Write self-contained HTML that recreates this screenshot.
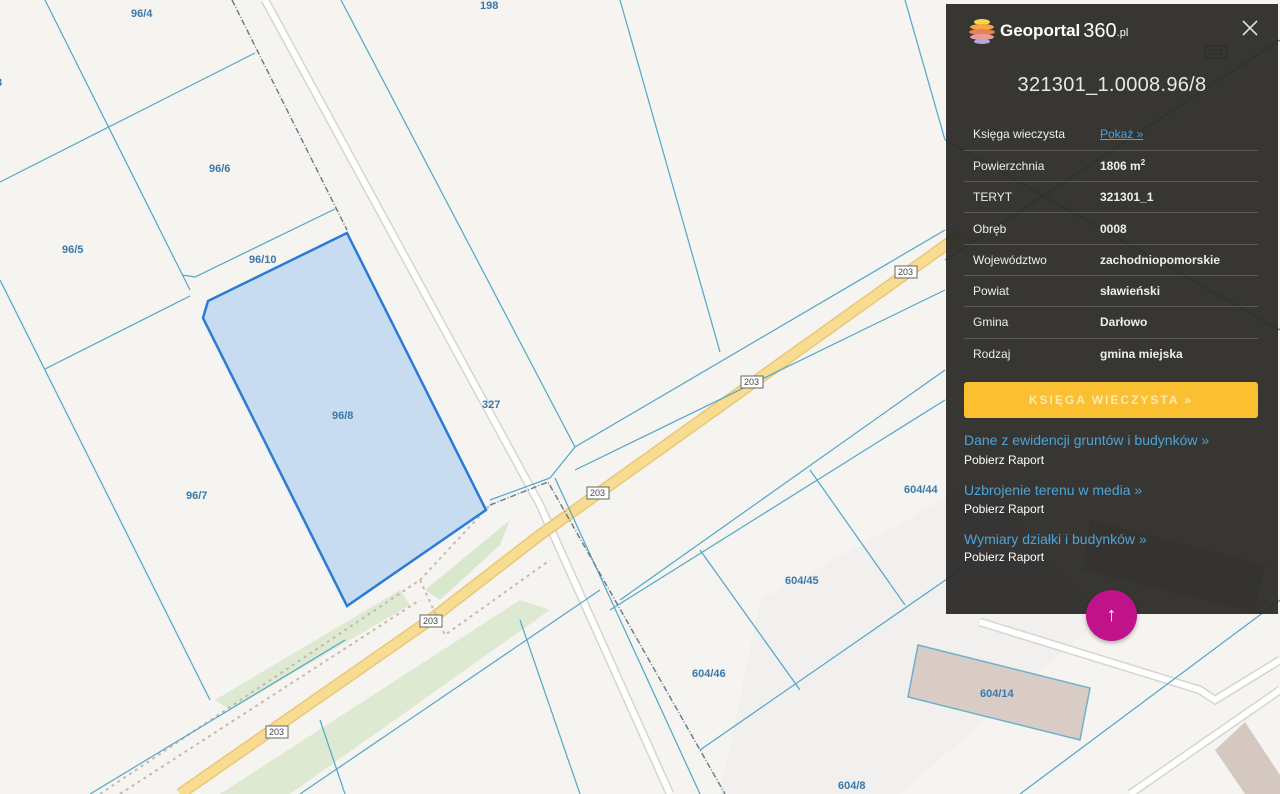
<!DOCTYPE html>
<html><head><meta charset="utf-8"><style>
*{margin:0;padding:0;box-sizing:border-box}
body{width:1280px;height:794px;overflow:hidden;background:#f6f4f1;position:relative;font-family:"Liberation Sans",sans-serif}
svg.map{position:absolute;left:0;top:0}
.panel{position:absolute;left:946px;top:4px;width:332px;height:610px;background:rgba(40,39,37,0.93);color:#fff}
.logo{position:absolute;left:22px;top:14px;display:flex;align-items:center;font-size:17px;font-weight:bold;color:#fff}
.logo .n{font-weight:normal;font-size:20px;margin-left:3px}
.logo .pl{font-size:11px;font-weight:normal;margin-top:4px}
.close{position:absolute;right:18px;top:14px;width:20px;height:20px}
.title{position:absolute;left:0;width:100%;top:70px;text-align:center;font-size:20px;color:#e8e8e8;letter-spacing:0.3px}
table{position:absolute;left:18px;top:115px;width:294px;border-collapse:collapse;font-size:12px}
td{height:31.3px;border-bottom:1px solid #5a5957;padding-left:9px;color:#eee}
td.v{font-weight:bold;width:168px;padding-left:10px}
tr:last-child td{border-bottom:none}
a{color:#4aa3d8}
.btn{position:absolute;left:18px;top:378px;width:294px;height:36px;background:#fbbf32;border-radius:3px;text-align:center;line-height:36px;font-size:12px;font-weight:bold;letter-spacing:2px;color:#fde9b0}
.lnk{position:absolute;left:18px;font-size:14px;color:#4ea3d6}
.rap{position:absolute;left:18px;font-size:12px;color:#fff}
.fab{position:absolute;left:1086px;top:590px;width:51px;height:51px;border-radius:50%;background:#c0138a;color:#fff;text-align:center;line-height:51px;font-size:20px;box-shadow:0 2px 4px rgba(0,0,0,.3)}
</style></head><body>
<svg class="map" width="1280" height="794" viewBox="0 0 1280 794">
<polygon points="760,600 980,480 1100,620 900,794 720,794" fill="#f1f0ee"/>
<polygon points="425,590 510,520 500,545 440,600" fill="#d9e8cc"/>
<polygon points="215,700 400,590 410,605 230,710" fill="#dde9d0"/>
<polygon points="220,794 520,600 550,610 290,794" fill="#dde9d0"/>
<polyline points="265,0 540,505 670,794" fill="none" stroke="#d8d4cf" stroke-width="9"/>
<polyline points="265,0 540,505 670,794" fill="none" stroke="#fff" stroke-width="6"/>
<polyline points="980,622 1200,690 1215,700 1280,660" fill="none" stroke="#d8d4cf" stroke-width="9"/>
<polyline points="980,622 1200,690 1215,700 1280,660" fill="none" stroke="#fff" stroke-width="6"/>
<line x1="1130" y1="794" x2="1280" y2="690" stroke="#d8d4cf" stroke-width="9"/>
<line x1="1130" y1="794" x2="1280" y2="690" stroke="#fff" stroke-width="6"/>
<polyline points="180,794 430,620 540,535 750,385 960,235" fill="none" stroke="#e9c877" stroke-width="12"/>
<polyline points="180,794 430,620 540,535 750,385 960,235" fill="none" stroke="#f8dc92" stroke-width="9"/>
<g fill="none" stroke="#c9b7b0" stroke-width="2" stroke-dasharray="3,4">
<polyline points="100,794 420,580 490,505"/>
<polyline points="420,580 445,635 550,560"/>
<polyline points="120,794 420,600"/>
</g>
<g fill="none" stroke="#4fa7c9" stroke-width="1.2">
<line x1="45" y1="0" x2="190" y2="290"/>
<line x1="0" y1="182" x2="255" y2="53"/>
<polyline points="182,275 195,277 335,209"/>
<line x1="0" y1="280" x2="210" y2="700"/>
<line x1="45" y1="369" x2="190" y2="296"/>
<line x1="341" y1="0" x2="575" y2="447"/>
<line x1="620" y1="0" x2="720" y2="352"/>
<polyline points="490,500 550,478 575,447 945,230"/>
<line x1="555" y1="478" x2="700" y2="794"/>
<line x1="575" y1="470" x2="945" y2="290"/>
<line x1="610" y1="610" x2="945" y2="400"/>
<line x1="700" y1="550" x2="800" y2="690"/>
<line x1="810" y1="470" x2="905" y2="605"/>
<line x1="620" y1="600" x2="945" y2="370"/>
<line x1="700" y1="750" x2="960" y2="570"/>
<line x1="90" y1="794" x2="345" y2="640"/>
<line x1="345" y1="794" x2="320" y2="720"/>
<line x1="300" y1="794" x2="600" y2="590"/>
<line x1="520" y1="620" x2="580" y2="794"/>
<line x1="1020" y1="794" x2="1280" y2="600"/>
<line x1="905" y1="0" x2="945" y2="140"/>
<line x1="945" y1="140" x2="1280" y2="330"/>
<line x1="945" y1="260" x2="1280" y2="40"/>
</g>
<g fill="none" stroke="#6b7f8e" stroke-width="1.5" stroke-dasharray="6,2,1,2">
<line x1="232" y1="0" x2="347" y2="230"/>
<polyline points="490,505 548,482 725,794"/>
</g>
<polygon points="918,645 1090,688 1080,740 908,697" fill="#d8ccc4" stroke="#6fb0c9" stroke-width="1.5"/>
<polygon points="1090,520 1265,565 1255,612 1082,570" fill="#d8ccc4"/>
<polygon points="1215,750 1245,722 1280,775 1280,794 1245,794" fill="#d4c8c0"/>
<polygon points="347,233 208,301 203,318 347,606 486,510" fill="#c8dcf1" stroke="#2a7bd6" stroke-width="2.5"/>
<g font-family="Liberation Sans" font-weight="bold" font-size="11" fill="#3b79a8">
<text x="131" y="17">96/4</text><text x="480" y="9">198</text><text x="-4" y="86">3</text>
<text x="209" y="172">96/6</text><text x="62" y="253">96/5</text><text x="249" y="263">96/10</text>
<text x="332" y="419">96/8</text><text x="186" y="499">96/7</text><text x="482" y="408">327</text>
<text x="904" y="493">604/44</text><text x="785" y="584">604/45</text><text x="692" y="677">604/46</text>
<text x="980" y="697">604/14</text><text x="838" y="789">604/8</text>
</g>
<g font-family="Liberation Sans" font-size="9" fill="#444">
<rect x="895" y="266" width="22" height="12" fill="#fff" stroke="#666"/><text x="898" y="275">203</text>
<rect x="741" y="376" width="22" height="12" fill="#fff" stroke="#666"/><text x="744" y="385">203</text>
<rect x="587" y="487" width="22" height="12" fill="#fff" stroke="#666"/><text x="590" y="496">203</text>
<rect x="420" y="615" width="22" height="12" fill="#fff" stroke="#666"/><text x="423" y="624">203</text>
<rect x="266" y="726" width="22" height="12" fill="#fff" stroke="#666"/><text x="269" y="735">203</text>
<rect x="1205" y="46" width="22" height="12" fill="#fff" stroke="#666"/><text x="1208" y="55">203</text>
</g>
</svg>
<div class="panel">
<div class="logo"><svg width="28" height="26" viewBox="0 0 28 26"><ellipse cx="14" cy="4" rx="8" ry="3" fill="#f7d54a"/><ellipse cx="14" cy="9" rx="12" ry="3" fill="#f4a640"/><ellipse cx="14" cy="14" rx="13" ry="3" fill="#e8805a"/><ellipse cx="14" cy="19" rx="12" ry="3" fill="#e99aa0"/><ellipse cx="14" cy="23.5" rx="8" ry="2.5" fill="#b8a8d8"/></svg><span style="margin-left:4px">Geoportal</span><span class="n">360</span><span class="pl">.pl</span></div>
<svg class="close" viewBox="0 0 20 20"><path d="M3 3L17 17M17 3L3 17" stroke="#ddd" stroke-width="1.6"/></svg>
<div class="title">321301_1.0008.96/8</div>
<table>
<tr><td>Księga wieczysta</td><td class="v" style="font-weight:normal"><a href="#">Pokaż »</a></td></tr>
<tr><td>Powierzchnia</td><td class="v">1806 m<sup style="font-size:8px">2</sup></td></tr>
<tr><td>TERYT</td><td class="v">321301_1</td></tr>
<tr><td>Obręb</td><td class="v">0008</td></tr>
<tr><td>Województwo</td><td class="v">zachodniopomorskie</td></tr>
<tr><td>Powiat</td><td class="v">sławieński</td></tr>
<tr><td>Gmina</td><td class="v">Darłowo</td></tr>
<tr><td>Rodzaj</td><td class="v">gmina miejska</td></tr>
</table>
<div class="btn">KSIĘGA WIECZYSTA »</div>
<div class="lnk" style="top:428px">Dane z ewidencji gruntów i budynków »</div>
<div class="rap" style="top:449px">Pobierz Raport</div>
<div class="lnk" style="top:478px">Uzbrojenie terenu w media »</div>
<div class="rap" style="top:498px">Pobierz Raport</div>
<div class="lnk" style="top:527px">Wymiary działki i budynków »</div>
<div class="rap" style="top:546px">Pobierz Raport</div>
</div>
<div class="fab">↑</div>
</body></html>
